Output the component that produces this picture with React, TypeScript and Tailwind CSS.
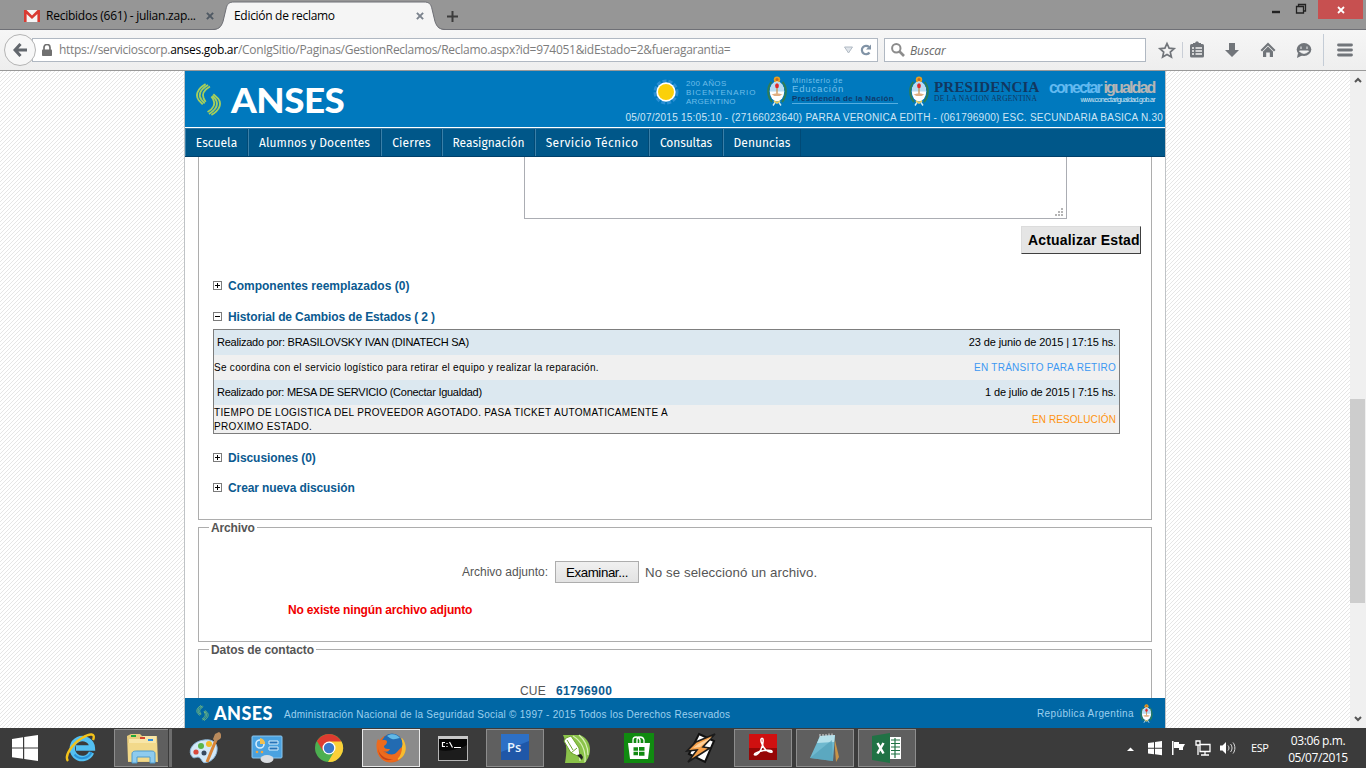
import React from 'react';
import type { ReactNode } from 'react';

const SANS = "font-['Liberation_Sans',Arial,sans-serif]";
const UI = "font-['Open_Sans','Noto_Sans',sans-serif]";

function Escudo({ className }: { className: string }) {
  return (
    <svg viewBox="0 0 20 30" className={className}>
      <path d="M4.500 6C0 11 0 20 5 26M15.500 6c4.500 5 4.500 14-.5 20" fill="none" stroke="#2f7d55" strokeWidth="2" />
      <circle cx="10" cy="3.600" r="3.200" fill="#e8a020" />
      <circle cx="10" cy="3.400" r="1.500" fill="#c76a1c" />
      <ellipse cx="10" cy="15.500" rx="7.200" ry="10" fill="#fff" />
      <path d="M2.800 15.500a7.200 10 0 0 1 14.400 0z" fill="#b8dcf3" />
      <path d="M10 9v9" stroke="#c98b45" strokeWidth="1.200" />
      <ellipse cx="10" cy="9.800" rx="1.900" ry="2.500" fill="#e02b2b" />
      <path d="M4.500 18.500c3-1.500 8-1.500 11 0l-3 1.600H7.500z" fill="#e0ae82" />
      <path d="M7 25l3 2 3-2" fill="none" stroke="#e9c95c" strokeWidth="1.600" />
      <path d="M8 26.500l-2 3M12 26.500l2 3" stroke="#cfe9f8" strokeWidth="1.400" />
    </svg>
  );
}

function AnsesMark({ className, color }: { className: string; color: string }) {
  return (
    <svg viewBox="0 0 26 34" className={className} fill="none" stroke={color} strokeWidth="1.900">
      <path d="M10 1C1 6-1 13 3 18l4 4" />
      <path d="M12.500 2C4 7 2 12 5.500 17l3.500 4" />
      <path d="M14.500 3.500C7 8 6 12 8 16l2 3.500" />
      <path d="M16 33c9-5 11-12 7-17l-5-4.500" />
      <path d="M13.500 32c8-5 10-10 7-15l-3.500-4" />
      <path d="M12 30c7-4 8-9 6-13l-2-3" />
    </svg>
  );
}

function TabStrip() {
  return (
    <div className={`relative flex h-[30px] bg-[#969696] border-b border-[#6f7076] ${UI} text-[12px] text-black`}>
      <svg viewBox="0 0 450 30" className="absolute left-0 top-0 h-[30px] w-[450px]">
        <path d="M212 30c6 0 9-2 11-8l3-13c1-5 3-7 8-7h190c5 0 7 2 8 7l3 13c2 6 5 8 11 8z" fill="#f5f5f5" />
        <path d="M212 29.500c6 0 9-2 11-8l3-12.500c1-5 3-7 8-7h190c5 0 7 2 8 7l3 12.500c2 6 5 8 11 8" fill="none" stroke="#6f7076" />
      </svg>
      <div className="relative flex h-[30px] w-full items-center pt-[2px]">
        <svg viewBox="0 0 16 12" className="ml-[24px] h-[12px] w-[16px] shrink-0">
          <rect width="16" height="12" rx="1" fill="#f4f4f4" />
          <path d="M0 0h2.500L8 5.500 13.500 0H16v12h-2.600V4L8 9 2.600 4v8H0z" fill="#d93a32" />
        </svg>
        <span className="ml-[6px] w-[154px] whitespace-nowrap tracking-[-0.24px]">Recibidos (661) - julian.zap...</span>
        <svg viewBox="0 0 9 9" className="ml-[6px] h-[8px] w-[8px]"><path d="M1 1l7 7M8 1L1 8" stroke="#4f5963" strokeWidth="2.200" /></svg>
        <span className="ml-[20px] w-[180px] whitespace-nowrap tracking-[-0.3px]">Edición de reclamo</span>
        <svg viewBox="0 0 9 9" className="ml-[2px] h-[8px] w-[8px]"><path d="M1 1l7 7M8 1L1 8" stroke="#7b838d" strokeWidth="2.200" /></svg>
        <svg viewBox="0 0 11 11" className="ml-[23px] h-[11px] w-[11px]"><path d="M5.500 0v11M0 5.500h11" stroke="#3c3c3c" strokeWidth="2" /></svg>
      </div>
      <div className="relative flex h-[19px] shrink-0">
        <svg viewBox="0 0 48 19" className="h-[19px] w-[48px]">
          <path d="M2 12h8" stroke="#222" strokeWidth="2.400" />
          <path d="M26.500 6.500h7v6.500h-7zM28.500 6V4.500h7v6.500H34" fill="none" stroke="#222" strokeWidth="1.300" />
        </svg>
        <div className="mr-[3px] flex h-[19px] w-[45px] items-center justify-center bg-[#c75050]">
          <svg viewBox="0 0 8 8" className="h-[8px] w-[8px]"><path d="M1 1l6 6M7 1L1 7" stroke="#fff" strokeWidth="1.800" /></svg>
        </div>
      </div>
    </div>
  );
}

function Toolbar() {
  return (
    <div className={`flex h-[41px] items-center border-b border-[#999] bg-gradient-to-b from-[#f6f6f6] to-[#eeeeee] ${UI} text-[12px]`}>
      <div className="relative z-10 ml-[4px] flex h-[32px] w-[32px] shrink-0 items-center justify-center rounded-full border border-[#b4b4b4] bg-[#f7f7f7]">
        <svg viewBox="0 0 14 14" className="h-[14px] w-[14px]"><path d="M7.500 1L2 7l5.500 6M2 7h12" fill="none" stroke="#62676d" strokeWidth="3" /></svg>
      </div>
      <div className="-ml-[4px] flex h-[24px] w-[846px] shrink-0 items-center border border-[#b0b8c2] bg-white text-[#7d7d7d]">
        <svg viewBox="0 0 10 12" className="ml-[9px] h-[12px] w-[10px]">
          <path d="M2 6V3.500a3 3 0 0 1 6 0V6" fill="none" stroke="#707070" strokeWidth="1.700" />
          <rect y="5.500" width="10" height="6.500" rx=".8" fill="#707070" />
        </svg>
        <span className="ml-[7px] w-[785px] whitespace-nowrap tracking-[-0.285px]">
          https://servicioscorp.<span className="text-black">anses.gob.ar</span>/ConIgSitio/Paginas/GestionReclamos/Reclamo.aspx?id=974051&amp;idEstado=2&amp;fueragarantia=
        </span>
        <svg viewBox="0 0 9 8" className="h-[8px] w-[9px] shrink-0"><path d="M.5 1h8L4.500 7z" fill="#dfe4ea" stroke="#b1bac4" /></svg>
        <svg viewBox="0 0 12 12" className="ml-[7px] h-[12px] w-[12px] shrink-0">
          <path d="M9.500 8.500a4.200 4.200 0 1 1-.5-5.500" fill="none" stroke="#8193a6" strokeWidth="2.200" />
          <path d="M11 .5v5H6z" fill="#8193a6" />
        </svg>
      </div>
      <div className="ml-[6px] flex h-[24px] w-[262px] shrink-0 items-center border border-[#b0b8c2] bg-white">
        <svg viewBox="0 0 14 14" className="ml-[6px] h-[14px] w-[14px]"><circle cx="5.300" cy="5.300" r="4.200" fill="none" stroke="#8c8c8c" strokeWidth="2" /><path d="M8.500 8.500l4.500 4.500" stroke="#8c8c8c" strokeWidth="2.600" /></svg>
        <span className="ml-[5px] pt-px italic tracking-[-0.1px] text-[#6a6a6a]">Buscar</span>
      </div>
      <svg viewBox="0 0 220 36" className="h-[36px] w-[220px] shrink-0" fill="#71757a">
        <path d="M21 11.500l2.100 4.700 5 .5-3.800 3.400 1.100 5-4.400-2.600-4.400 2.600 1.100-5-3.800-3.400 5-.5z" fill="none" stroke="#71757a" strokeWidth="1.700" />
        <path d="M36.500 10v16" stroke="#c9ced6" />
        <rect x="44" y="12" width="14" height="13.500" rx="1.500" />
        <path d="M47 13v-2h2l1-1.500h2l1 1.500h2v2" />
        <path d="M46 16h2M49.500 16H56M46 19h2M49.500 19H56M46 22h2M49.500 22H56" stroke="#f3f3f3" strokeWidth="1.500" />
        <path d="M83 11h6v7h4l-7 7-7-7h4z" />
        <path d="M122 10.500l7.500 7.500-1.500 1.500-6-6-6 6-1.500-1.500z" />
        <path d="M117 19.500l5-5 5 5V25h-3.200v-4.500h-3.600V25H117z" />
        <ellipse cx="158" cy="17.500" rx="7.300" ry="6.500" /><path d="M152 21l-1 5 6-3z" />
        <path d="M155 14.500v2.500M161 14.500v2.500M153.500 19c2 3 7 3 9 0z" stroke="#f3f3f3" fill="#f3f3f3" />
        <path d="M177.500 2v32" stroke="#c4ccd6" />
        <path d="M192.500 13h13M192.500 18h13M192.500 23h13" stroke="#71757a" strokeWidth="2.800" strokeLinecap="round" />
      </svg>
    </div>
  );
}

function SiteHeader() {
  return (
    <header className={`flex h-[57px] justify-between border-b border-white bg-[#0079be] ${SANS}`}>
      <div className="flex">
        <AnsesMark className="ml-[11px] mt-[12px] h-[33px] w-[25px]" color="#a5cf5c" />
        <span className="ml-[10px] mt-[11px] origin-left scale-x-[1.05] font-['Lato',sans-serif] text-[35px] font-black leading-[35px] tracking-[-0.5px] text-white">ANSES</span>
      </div>
      <div className="flex w-[542px] flex-col">
        <div className="flex h-[40px]">
          <svg viewBox="0 0 26 26" className="ml-[30px] mt-[8px] h-[26px] w-[26px] shrink-0">
            <circle cx="13" cy="13" r="11" fill="none" stroke="#2a8fd4" strokeWidth="3" strokeDasharray="4 2" />
            <circle cx="13" cy="13" r="9.700" fill="#fff" />
            <circle cx="13" cy="13" r="8" fill="#fbd00a" />
          </svg>
          <div className="ml-[7px] mt-[8px] w-[72px] shrink-0 whitespace-nowrap text-[8px] leading-[9px] text-[#6dbde9]">
            <div className="tracking-[0.35px]">200 AÑOS</div><div className="tracking-[0.85px]">BICENTENARIO</div><div className="tracking-[0.25px]">ARGENTINO</div>
          </div>
          <Escudo className="ml-[9px] mt-[5px] h-[30px] w-[20px] shrink-0" />
          <div className="ml-[5px] mt-[5px] h-[28px] w-[106px] shrink-0 whitespace-nowrap border-b border-[#55aee0] text-[8px] leading-[9px] text-[#74c0ea]">
            <div className="h-[8px] text-[7.5px] tracking-[0.65px]">Ministerio de</div>
            <div className="h-[10px] text-[9.5px] leading-[10px] tracking-[0.85px]">Educación</div>
            <div className="font-bold tracking-[0.32px] text-[#113a6b]">Presidencia de la Nación</div>
          </div>
          <Escudo className="ml-[11px] mt-[5px] h-[30px] w-[20px] shrink-0" />
          <div className="ml-[5px] mt-[9px] w-[105px] shrink-0 whitespace-nowrap font-['Liberation_Serif',serif] text-[#12375f]">
            <div className="text-[15px] font-bold leading-[15px] tracking-[0.2px]">PRESIDENCIA</div>
            <div className="text-[7.5px] leading-[7px] tracking-[0.25px]">DE LA NACION ARGENTINA</div>
          </div>
          <div className="ml-[10px] mt-[9px] w-[106px] shrink-0 whitespace-nowrap">
            <div className="text-[16px] font-bold leading-[16px] tracking-[-1.85px] text-[#62b9f0]">conectar <span className="text-[#b5b5b5]">igualdad</span></div>
            <div className="text-right text-[7px] leading-[8px] tracking-[-0.64px] text-[#d5e6f2]">www.conectarigualdad.gob.ar</div>
          </div>
        </div>
        <div className="w-[540px] whitespace-nowrap text-right text-[10px] leading-[14px] tracking-[0.24px] text-[#cfe6f5]">
          05/07/2015 15:05:10 - (27166023640) PARRA VERONICA EDITH - (061796900) ESC. SECUNDARIA BASICA N.30
        </div>
      </div>
    </header>
  );
}

function NavItem({ className, children }: { className: string; children: ReactNode }) {
  return (
    <div className={`flex items-center justify-center whitespace-nowrap border-l border-r border-l-[#3a7fa8] border-r-[#014a76] ${className}`}>
      {children}
    </div>
  );
}

function Nav() {
  return (
    <nav className="flex h-[29px] border-b border-t border-b-[#00406a] border-t-[#2f78a5] bg-[#005789] font-['Fira_Sans','Noto_Sans','Open_Sans',sans-serif] text-[12px] text-white">
      <NavItem className="w-[63px] tracking-[0.05px]">Escuela</NavItem>
      <NavItem className="w-[133px] tracking-[0.08px]">Alumnos y Docentes</NavItem>
      <NavItem className="w-[61px] tracking-[0.12px]">Cierres</NavItem>
      <NavItem className="w-[93px] tracking-[0.02px]">Reasignación</NavItem>
      <NavItem className="w-[114px] tracking-[0.35px]">Servicio Técnico</NavItem>
      <NavItem className="w-[74px] tracking-[-0.08px]">Consultas</NavItem>
      <NavItem className="w-[78px] tracking-[0.05px]">Denuncias</NavItem>
    </nav>
  );
}

function Toggle({ open, className, children }: { open?: boolean; className: string; children: ReactNode }) {
  return (
    <div className={`flex h-[20px] items-center text-[12px] font-bold text-[#0b5a90] ${className}`}>
      <svg viewBox="0 0 9 9" className="-mt-px ml-[14px] mr-[6px] h-[9px] w-[9px]" shapeRendering="crispEdges">
        <rect x=".5" y=".5" width="8" height="8" fill="#fff" stroke="#7b7b7b" />
        <path d={open ? 'M2 4.500h5' : 'M2 4.500h5M4.500 2v5'} stroke="#000" />
      </svg>
      <span className="whitespace-nowrap">{children}</span>
    </div>
  );
}

function History() {
  return (
    <div className="ml-[14px] mt-[2px] w-[907px] border border-[#7d7d7d] text-[11px] text-black">
      <div className="flex h-[25px] items-center justify-between bg-[#dce8f0] px-[3px]">
        <span className="tracking-[-0.23px]">Realizado por: BRASILOVSKY IVAN (DINATECH SA)</span>
        <span className="tracking-[-0.12px]">23 de junio de 2015 | 17:15 hs.</span>
      </div>
      <div className="flex h-[25px] items-center justify-between bg-[#f0f0f0] pr-[3px] text-[10px]">
        <span className="tracking-[0.28px]">Se coordina con el servicio logístico para retirar el equipo y realizar la reparación.</span>
        <span className="tracking-[0.25px] text-[#3d98f2]">EN TRÁNSITO PARA RETIRO</span>
      </div>
      <div className="flex h-[25px] items-center justify-between bg-[#dce8f0] px-[3px]">
        <span className="tracking-[-0.27px]">Realizado por: MESA DE SERVICIO (Conectar Igualdad)</span>
        <span className="tracking-[-0.14px]">1 de julio de 2015 | 7:15 hs.</span>
      </div>
      <div className="flex h-[28px] items-center justify-between bg-[#f0f0f0] pr-[3px] pt-[2px] text-[10px] leading-[14px]">
        <span className="tracking-[0.33px]">TIEMPO DE LOGISTICA DEL PROVEEDOR AGOTADO. PASA TICKET AUTOMATICAMENTE A<br />PROXIMO ESTADO.</span>
        <span className="tracking-[0.1px] text-[#ff930f]">EN RESOLUCIÓN</span>
      </div>
    </div>
  );
}

function Content() {
  return (
    <main className={`h-[541px] overflow-hidden bg-white px-[13px] ${SANS} text-[12px] text-[#555]`}>
      <section className="h-[363px] border-x border-b border-[#adadad]">
        <div className="ml-[325px] flex h-[62px] w-[543px] items-end justify-end border-x border-b border-[#abadb3] p-[3px] pb-[2px]">
          <svg viewBox="0 0 8 8" className="h-[8px] w-[8px]" fill="#b5b5b5" shapeRendering="crispEdges">
            <path d="M6 0h2v2H6zM3 3h2v2H3zM6 3h2v2H6zM0 6h2v2H0zM3 6h2v2H3zM6 6h2v2H6z" />
          </svg>
        </div>
        <button className="ml-[822px] mt-[7px] block h-[28px] w-[120px] overflow-hidden whitespace-nowrap border border-b-[#404040] border-l-[#dcdcdc] border-r-[#404040] border-t-[#dcdcdc] bg-[#e5e5e5] pl-[6px] pt-px text-left text-[14px] font-bold tracking-[0.18px] text-black">Actualizar Estado</button>
        <Toggle className="mt-[22px]">Componentes reemplazados (0)</Toggle>
        <Toggle open className="mt-[11px] tracking-[-0.12px]">Historial de Cambios de Estados ( 2 )</Toggle>
        <History />
        <Toggle className="mt-[14px] tracking-[-0.06px]">Discusiones (0)</Toggle>
        <Toggle className="mt-[10px] tracking-[-0.1px]">Crear nueva discusión</Toggle>
      </section>
      <fieldset className="mt-[7px] h-[115px] border border-[#adadad]">
        <legend className="ml-[10px] h-px px-[2px] font-bold leading-[3px] tracking-[-0.15px]">Archivo</legend>
        <div className="mt-[33px] flex h-[22px] items-center">
          <span className="ml-[263px] w-[87px] whitespace-nowrap">Archivo adjunto:</span>
          <button className="ml-[6px] h-[22px] w-[84px] whitespace-nowrap border border-[#adadad] bg-gradient-to-b from-[#f0f0f0] to-[#e3e3e3] pt-px text-[13.3px] tracking-[-0.4px] text-black">Examinar...</button>
          <span className="ml-[6px] pt-px text-[13.3px] tracking-[0.08px]">No se seleccionó un archivo.</span>
        </div>
        <div className="ml-[89px] mt-[17px] h-[20px] font-bold leading-[20px] tracking-[-0.16px] text-[#f00000]">No existe ningún archivo adjunto</div>
      </fieldset>
      <fieldset className="mt-[7px] h-[115px] border border-[#adadad]">
        <legend className="ml-[10px] h-px px-[2px] font-bold leading-[3px] tracking-[-0.06px]">Datos de contacto</legend>
        <div className="ml-[321px] mt-[31px] flex h-[20px] items-center">
          <span className="w-[36px] tracking-[0.2px]">CUE</span>
          <span className="font-bold tracking-[0.35px] text-[#0b5a90]">61796900</span>
        </div>
      </fieldset>
    </main>
  );
}

function SiteFooter() {
  return (
    <footer className={`flex h-[30px] items-center bg-[#0067a5] ${SANS} text-[10px] text-[#9cd0ef]`}>
      <AnsesMark className="ml-[11px] h-[16px] w-[13px]" color="#7cc07c" />
      <span className="ml-[5px] w-[61px] font-['Lato',sans-serif] text-[18px] font-black tracking-[0.45px] text-white">ANSES</span>
      <span className="ml-[9px] mt-[3px] whitespace-nowrap tracking-[0.26px]">Administración Nacional de la Seguridad Social © 1997 - 2015 Todos los Derechos Reservados</span>
      <span className="ml-auto mt-[1px] tracking-[0.4px]">República Argentina</span>
      <Escudo className="ml-[6px] mr-[12px] h-[19px] w-[13px]" />
    </footer>
  );
}

function Task({ frame, children }: { frame?: 'open' | 'active'; children: ReactNode }) {
  const look = frame === 'active' ? 'border-[#e8e8e8] bg-[#8b8b8b]' : frame === 'open' ? 'border-[#8d8d8d] bg-[#5f5f5f]' : 'border-transparent';
  return (
    <div className={`flex h-[38px] w-[58px] shrink-0 items-center justify-center border ${look}`}>
      <svg viewBox="0 0 32 32" className="h-[32px] w-[32px]">{children}</svg>
    </div>
  );
}

function Taskbar() {
  return (
    <div className={`flex h-[40px] items-center bg-[#3b3b3b] ${UI} text-white`}>
      <svg viewBox="0 0 26 26" className="ml-[12px] h-[26px] w-[26px] shrink-0" fill="#fff">
        <path d="M0 4l11-1.700V12.500H0zM12.200 2.100L26 0v12.500H12.200zM0 13.600h11v10.200L0 22.200zM12.200 13.600H26V26l-13.800-2.100z" />
      </svg>
      <div className="ml-[14px] flex gap-[4px]">
        <Task>
          <path d="M26.500 20.500a10 10 0 1 1 .8-4.500H11" fill="none" stroke="#53c0f2" strokeWidth="5.500" />
          <path d="M26.500 20a10 10 0 0 1-17 2.500" fill="none" stroke="#2a93d8" strokeWidth="2" />
          <path d="M3 29c-4-5 4-17 14-23C25 1 31 1 28 8" fill="none" stroke="#f2c21b" strokeWidth="2.400" />
        </Task>
        <div className="relative">
          <Task frame="open">
            <path d="M0 4l4-2h9l2 2h15l1 26H1z" fill="#e8cd7d" />
            <path d="M2 7h12l2-3h13v25H2z" fill="#f8e6a8" />
            <path d="M1 11h29v18H1z" fill="#f2d98a" />
            <path d="M4 3h5v2H4z" fill="#21a83b" /><path d="M13 5h5v2h-5z" fill="#d5462f" /><path d="M21 7h5v2h-5z" fill="#2d8de0" />
            <path d="M5 31V22c0-3 3-3 5-3h13c3 0 5 0 5 3v9h-5v-6H10v6z" fill="#8ecbee" stroke="#4f9bcc" />
          </Task>
          <div className="absolute left-[54px] top-0 h-[38px] w-[4px] border-l border-[#3b3b3b] bg-[#6d6d6d]" />
        </div>
        <Task>
          <path d="M15 8C5 9-1 17 2 23s6 0 9 3 2 6 8 4 10-9 9-15-7-8-13-7z" fill="#d3e8f7" stroke="#8cb8da" />
          <circle cx="7" cy="20" r="2.600" fill="#d9483b" /><circle cx="12" cy="14" r="3" fill="#59b54a" /><circle cx="20" cy="12" r="3" fill="#f2b92a" /><circle cx="15" cy="21" r="2.500" fill="#38495e" />
          <path d="M18 30L27 8" stroke="#d98538" strokeWidth="3" /><path d="M24 7l2-5 4-2c3 2 3 5 1 7l-5 3z" fill="#b98a5c" />
        </Task>
        <Task>
          <rect x="1" y="4" width="30" height="22" rx="1" fill="#4aa2e0" stroke="#8cc7ee" />
          <circle cx="9" cy="12" r="4" fill="none" stroke="#d5edfb" strokeWidth="1.600" /><path d="M9 12V6a6 6 0 0 1 5 6z" fill="#f3bf4c" />
          <path d="M18 9h9v3h-9zM18 15h9v3h-9z" fill="#2673b8" stroke="#d8effc" />
          <circle cx="6" cy="20" r="1.300" fill="#f3a73c" /><circle cx="11" cy="20" r="1.300" fill="#f3a73c" />
          <ellipse cx="16" cy="27" rx="6.500" ry="4" fill="#d9dce0" />
        </Task>
        <Task>
          <circle cx="16" cy="16" r="14" fill="#4caf50" />
          <path d="M3.900 9A14 14 0 0 1 28.100 9L28 10H16L10 19z" fill="#de3b2f" />
          <path d="M16 9.600h12.500A14 14 0 0 1 15 30l6.500-11z" fill="#fbd038" />
          <circle cx="16" cy="16" r="6.500" fill="#fff" /><circle cx="16" cy="16" r="5.200" fill="#3b78c9" />
        </Task>
        <Task frame="active">
          <circle cx="16" cy="16.500" r="14" fill="#e8661b" />
          <path d="M27 6c6 7 5 18-4 22l-4-14z" fill="#f8bc2e" />
          <circle cx="17" cy="12" r="10.500" fill="#226bb2" /><path d="M12 4c4-3 10-2 13 2-3 0-5 2-8 1s-3-2-5-3z" fill="#62b8e5" />
          <path d="M3 7c1 2 3 1 5 1 2 0 4 0 4 2s-2 3-3 4c0 3 3 3 6 3-2 4-6 3-8 1 2 6 10 7 15 2 2-2 3-4 5-5 0 10-6 15-13 15C3 29-1 15 3 7z" fill="#ed6b1e" />
          <path d="M3 15c0 8 8 13 15 12-8 4-15-2-15-12z" fill="#c64317" />
        </Task>
        <Task>
          <rect x="1.500" y="4.500" width="29" height="24" fill="#050505" stroke="#b5b5b5" />
          <path d="M1 4h30v3H1z" fill="#c8c8c8" /><path d="M2 18c10 2 20-1 28-5v15H2z" fill="#1c1c1c" />
          <path d="M8 10.500H5.500v4H8M10 11v1M10 14v1M12.500 10l3 5.500M17 15.500h7" fill="none" stroke="#fff" strokeWidth="1.200" />
        </Task>
        <Task frame="open">
          <rect x="2" y="2" width="28" height="26" fill="#1f57a8" /><path d="M2 2h28v7L2 20z" fill="#2d70c6" />
          <text x="8" y="20" fontSize="13" fontWeight="600" fill="#e9f4ff" fontFamily="Open Sans, sans-serif">Ps</text>
        </Task>
        <Task>
          <path d="M2 3h17c6 2 10 8 10 14 0 7-3 11-5 14H4C6 20 6 12 2 3z" fill="#8bc34a" />
          <path d="M12 4c8 5 13 13 12 26M7 5c8 6 12 14 12 24M18 3c6 5 9 11 9 20" fill="none" stroke="#d7efb6" strokeWidth="1.200" />
          <path d="M5 6l5-2 8 12 1 9-9-4L3 9z" fill="#fff" stroke="#6fa62f" /><path d="M10 21l6-5M6 8l6 10" stroke="#6fa62f" /><path d="M16 23l5 5 1-3-2-3z" fill="#222" />
        </Task>
        <Task>
          <rect x="1" y="1" width="30" height="30" fill="#108a10" />
          <path d="M5 11h22l-2 16H7z" fill="#fff" /><path d="M10 11V8c0-4 6-4 7 0v3M14 11V8c0-4 6-4 7 0v3" fill="none" stroke="#fff" strokeWidth="1.300" />
          <path d="M10.500 15.300h4.500v3.500h-4.500zM16 15h5.500v3.800H16zM10.500 19.700h4.500v3.500h-4.500zM16 19.700h5.500v4H16z" fill="#108a10" />
        </Task>
        <Task>
          <path d="M14 2L29 9 20 30 4 22z" fill="#fff" stroke="#111" strokeWidth="2" />
          <path d="M30 2L11 10 2 19l10-1L3 30l22-14-7-1z" fill="#f6a04a" stroke="#1b1b1b" strokeWidth="1.600" /><path d="M27 5L13 12l-5 4 7-1z" fill="#fdd09a" />
        </Task>
        <Task frame="open">
          <rect x="2" y="2" width="28" height="26" fill="#d01010" /><path d="M2 16h28v12H2z" fill="#960707" />
          <path d="M8 23c4 0 9-9 8-16-2-2-3 1-1 5 2 5 6 9 10 8 1-3-11-2-16 1-2 1-2 2-1 2z" fill="none" stroke="#fff" strokeWidth="1.500" />
        </Task>
        <Task frame="open">
          <path d="M25 4l5 21-3 5z" fill="#c89447" /><path d="M11 4l15-1-2 26-23-3z" fill="#6fb9cf" />
          <path d="M11 4l15-1-1 7-17 1z" fill="#b5e0ea" /><path d="M24 29L1 26 23 8z" fill="#4f9cb5" opacity=".6" />
          <path d="M11 4.500V2M14 4.500V2M17 4.500V2M20 4V1.500M23 4V1.500" stroke="#ddd" />
        </Task>
        <Task frame="open">
          <path d="M17 5h13v22H17z" fill="#fff" /><path d="M20 8h9M20 11.500h9M20 15h9M20 18.500h9M20 22h9M24 6v20" stroke="#207245" strokeWidth="1.200" />
          <path d="M1 4l18-3v30L1 28z" fill="#207245" /><path d="M6.500 11l6 10.500M12.500 11l-6 10.500" stroke="#fff" strokeWidth="2.500" />
        </Task>
      </div>
      <svg viewBox="0 0 112 20" className="ml-auto h-[20px] w-[112px] shrink-0" fill="#fff">
        <path d="M1 13h7L4.500 9.500z" />
        <path d="M22 5l6-.8v5.500h-6zM29 4l7-1v6.700h-7zM22 10.700h6v5.500l-6-.8zM29 10.700h7v6.500l-7-1z" />
        <path d="M46 3h1.500v14H46zM48 4h5v2h6l-2 3.500 0 2.500h-4v-2h-5z" />
        <path d="M74 6.500h10v7H74zM79 14v3M75 17h8M70 3h4v4h-4zM72 7v10" fill="none" stroke="#fff" strokeWidth="1.300" />
        <path d="M94 7.500h2.500L100 4v12l-3.500-3.500H94z" /><path d="M102 7.500c1.300 1.500 1.300 3.500 0 5M104.500 6c2 2.500 2 5.500 0 8M107 4.500c2.500 3 2.500 8 0 11" fill="none" stroke="#ddd" />
      </svg>
      <span className="ml-[13px] w-[19px] whitespace-nowrap pt-px text-[11px] tracking-[-0.4px]">ESP</span>
      <div className="ml-[18px] mr-[18px] w-[60px] whitespace-nowrap pt-px text-center text-[12px] leading-[17px] tracking-[-0.4px]">
        <div>03:06 p.m.</div><div>05/07/2015</div>
      </div>
    </div>
  );
}

export default function App() {
  return (
    <div className="flex h-[768px] w-[1366px] flex-col overflow-hidden">
      <TabStrip />
      <Toolbar />
      <div className="flex h-[657px]">
        <div className="flex flex-1 justify-center bg-[repeating-linear-gradient(135deg,#ffffff_0px,#ffffff_1.8284px,#e6e6e6_1.8284px,#e6e6e6_2.8284px)]">
          <div className="w-[982px] border-x border-[#bfc3c6]">
            <SiteHeader />
            <Nav />
            <Content />
            <SiteFooter />
          </div>
        </div>
        <div className="flex w-[16px] flex-col items-center bg-[#f0f0f0]">
          <svg viewBox="0 0 8 6" className="mt-[6px] h-[6px] w-[8px]"><path d="M1 5l3-3 3 3" fill="none" stroke="#555" strokeWidth="2" /></svg>
          <div className="mt-[316px] h-[204px] w-[15px] self-start bg-[#cdcdcd]" />
          <svg viewBox="0 0 8 6" className="mb-[6px] mt-auto h-[6px] w-[8px]"><path d="M1 1l3 3 3-3" fill="none" stroke="#555" strokeWidth="2" /></svg>
        </div>
      </div>
      <Taskbar />
    </div>
  );
}
